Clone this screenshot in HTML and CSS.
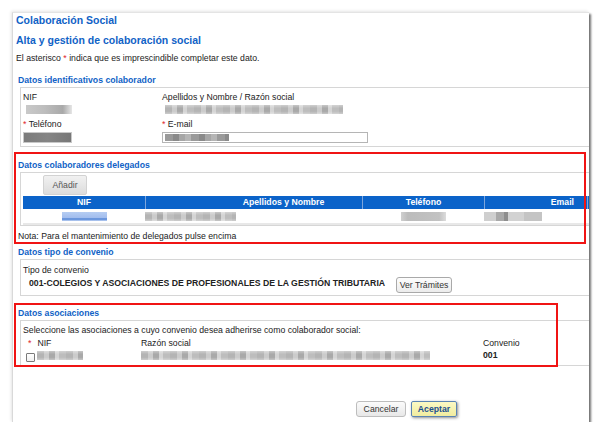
FILE: index.html
```html
<!DOCTYPE html>
<html lang="es">
<head>
<meta charset="utf-8">
<title>Colaboración Social</title>
<link rel="stylesheet" href="styles.css">
</head>
<body>
<div class="window">
  <div class="page">
    <h1 class="title">Colaboración Social</h1>
    <h2 class="title subtitle">Alta y gestión de colaboración social</h2>
    <p class="intro">El asterisco <span class="req">*</span> indica que es imprescindible completar este dato.</p>

    <section class="sec sec-id">
      <h3 class="sec-title">Datos identificativos colaborador</h3>
      <div class="box id-grid">
        <div class="field">
          <div class="label">NIF</div>
          <div class="value"><span class="blur b-nif"></span></div>
        </div>
        <div class="field">
          <div class="label">Apellidos y Nombre / Razón social</div>
          <div class="value"><span class="blur b-name"></span></div>
        </div>
        <div class="field field-lower">
          <div class="label"><span class="req">*</span> Teléfono</div>
          <div class="input input-tel"></div>
        </div>
        <div class="field field-lower">
          <div class="label"><span class="req">*</span> E-mail</div>
          <div class="input input-mail"><span class="blur b-mail"></span></div>
        </div>
      </div>
    </section>

    <section class="sec sec-del">
      <h3 class="sec-title">Datos colaboradores delegados</h3>
      <div class="box del-box">
        <button class="btn-add" type="button">Añadir</button>
        <div class="grid-table">
          <div class="th">NIF</div>
          <div class="th th-name">Apellidos y Nombre</div>
          <div class="th">Teléfono</div>
          <div class="th th-mail">Email</div>
          <div class="th"></div>
          <div class="td td-center"><span class="blur b-link"></span></div>
          <div class="td"><span class="blur b-dname"></span></div>
          <div class="td td-center"><span class="blur b-dtel"></span></div>
          <div class="td"><span class="blur b-dmail"></span></div>
          <div class="td"></div>
        </div>
      </div>
      <p class="nota">Nota: Para el mantenimiento de delegados pulse encima</p>
    </section>

    <section class="sec sec-conv">
      <h3 class="sec-title">Datos tipo de convenio</h3>
      <div class="box conv-box">
        <div class="label">Tipo de convenio</div>
        <div class="conv-row">
          <span class="conv-name">001-COLEGIOS Y ASOCIACIONES DE PROFESIONALES DE LA GESTIÓN TRIBUTARIA</span>
          <button class="btn-small" type="button">Ver Trámites</button>
        </div>
      </div>
    </section>

    <section class="sec sec-asoc">
      <h3 class="sec-title">Datos asociaciones</h3>
      <div class="box asoc-box">
        <div class="asoc-intro">Seleccione las asociaciones a cuyo convenio desea adherirse como colaborador social:</div>
        <div class="asoc-grid">
          <div class="asoc-head asoc-nif"><span class="req req-gap">*</span>NIF</div>
          <div class="asoc-head">Razón social</div>
          <div class="asoc-head">Convenio</div>
          <div class="asoc-cell asoc-check"><span class="checkbox"></span><span class="blur b-anif"></span></div>
          <div class="asoc-cell"><span class="blur b-arazon"></span></div>
          <div class="asoc-cell asoc-conv">001</div>
        </div>
      </div>
    </section>

    <div class="actions">
      <button class="btn-cancel" type="button">Cancelar</button>
      <button class="btn-ok" type="button">Aceptar</button>
    </div>
  </div>

  <div class="annot annot-del"></div>
  <div class="annot annot-asoc"></div>
</div>
</body>
</html>
```

FILE: styles.css
```css
* { box-sizing: border-box; }

body {
  margin: 0;
  background: #fff;
  font-family: "Liberation Sans", Arial, sans-serif;
  font-size: 8.7px;
  line-height: 12px;
  color: #222;
}

.window {
  position: relative;
  margin: 12px 0 0 12px;
  width: 577px;
  height: 410px;
  background: #fff;
  border-left: 1px solid #d9d9d9;
  border-top: 1px solid #e4e4e4;
  box-shadow: 2px 2px 2px rgba(0, 0, 0, 0.55), -1px -1px 3px rgba(0, 0, 0, 0.1);
  overflow: hidden;
}

.page {
  width: 600px;
  padding: 1px 0 0 3px;
}

.title {
  margin: 0;
  font-size: 10.5px;
  line-height: 13px;
  font-weight: bold;
  color: #1062c6;
}

.subtitle { margin-top: 7px; }

.intro { margin: 5px 0 0; color: #222; }

.req { color: #e0262b; }

.sec-title {
  margin: 0 0 1px;
  padding-left: 2px;
  font-size: 8.7px;
  line-height: 12px;
  font-weight: bold;
  color: #1062c6;
}

.sec-id .sec-title { margin-top: 10px; }
.sec-del .sec-title { margin-top: 12px; }
.sec-conv .sec-title { margin-top: 4px; }
.sec-asoc .sec-title { margin-top: 11px; }

.box {
  margin-left: 4px;
  border: 1px solid #d6d6d6;
  border-right: none;
  padding: 3px 0 3px 2px;
}

/* blurred (pixelated) private data */
.blur {
  display: inline-block;
  height: 9px;
  vertical-align: top;
  background:
    linear-gradient(rgba(255,255,255,0.35), rgba(255,255,255,0) 35%, rgba(255,255,255,0) 70%, rgba(255,255,255,0.35)),
    repeating-linear-gradient(90deg, #b4b4b4 0 7px, #cbcbcb 7px 12px, #a9a9a9 12px 18px, #d4d4d4 18px 22px, #bdbdbd 22px 29px);
}

/* section 1 */
.id-grid {
  display: grid;
  grid-template-columns: 139px 1fr;
}

.field-lower { margin-top: 2px; }

.value { height: 13px; padding: 2px 0 0 3px; }

.b-nif {
  width: 46px;
  background: linear-gradient(90deg, #c9c9c9, #bdbdbd 40%, #a9a9a9 80%, #e6e6e6);
}

.b-name { width: 178px; }

.input {
  margin-top: 2px;
  height: 11px;
  border: 1px solid #b5b5b5;
}

.input-tel {
  width: 49px;
  background: linear-gradient(90deg, #7b7b7b, #858585 50%, #777);
  border-color: #c8c8c8;
}

.input-mail {
  width: 206px;
  background: #fff;
  padding: 1px 0 0 2px;
}

.b-mail {
  width: 64px;
  height: 7px;
  background: repeating-linear-gradient(90deg, #9a9a9a 0 8px, #8a8a8a 8px 14px, #a6a6a6 14px 20px, #b5b5b5 20px 26px);
}

/* section 2 */
.del-box { padding: 2px 0 0 2px; }

.btn-add {
  display: block;
  margin-left: 20px;
  width: 44px;
  height: 20px;
  padding: 0;
  border: 1px solid #d2d2d2;
  border-radius: 2px;
  background: linear-gradient(#f1f1f1, #dcdcdc);
  font-family: inherit;
  font-size: 8.7px;
  color: #555;
}

.grid-table {
  margin-top: 1px;
  display: grid;
  grid-template-columns: 122px 217px 122px 103px 30px;
}

.th {
  height: 13px;
  line-height: 13px;
  background: #0b63c9;
  color: #fff;
  font-weight: bold;
  text-align: center;
  border-left: 1px solid #7ea6dc;
}

.th:first-child { border-left: none; }

.th-name { padding-left: 59px; }

.th-mail { text-align: right; padding-right: 13px; }

.td {
  height: 16px;
  padding-top: 3px;
  border-bottom: 2px solid #e8e8e8;
}

.td-center { text-align: center; }

.b-link {
  width: 45px;
  background: linear-gradient(#b6cdf2, #a2bdee 65%, #6c97dd 70%, #6c97dd 85%, #c9d9f5);
}

.b-dname { width: 91px; }

.b-dtel {
  width: 45px;
  background: linear-gradient(90deg, #d0d0d0, #bcbcbc 15%, #c2c2c2 85%, #dcdcdc);
}

.b-dmail {
  width: 58px;
  background: repeating-linear-gradient(90deg, #cfcfcf 0 12px, #a9a9a9 12px 20px, #8e8e8e 20px 24px, #d2d2d2 24px 40px, #c4c4c4 40px 58px);
}

.nota {
  margin: 4px 0 0;
  padding-left: 2px;
}

/* section 3 */
.conv-box { padding: 4px 0 2px 2px; }

.conv-row {
  margin-top: 1px;
  height: 16px;
  display: flex;
  align-items: flex-start;
}

.conv-name {
  margin-left: 6px;
  font-size: 8.7px;
  font-weight: bold;
  color: #222;
}

.btn-small {
  margin-left: 11px;
  width: 56px;
  height: 16px;
  padding: 0;
  border: 1px solid #a9a9a9;
  border-radius: 3px;
  background: linear-gradient(#fdfdfd, #ececec);
  font-family: inherit;
  font-size: 8.7px;
  color: #333;
}

/* section 4 */
.asoc-box { padding: 3px 0 2px 2px; }

.asoc-grid {
  margin-top: 1px;
  display: grid;
  grid-template-columns: 118px 342px 1fr;
}

.asoc-head { height: 12px; }

.asoc-nif { padding-left: 5px; }

.req-gap { margin-right: 6px; }

.asoc-cell { height: 14px; }

.asoc-check {
  display: flex;
  align-items: flex-start;
  padding-left: 3px;
}

.checkbox {
  margin-top: 4px;
  width: 9px;
  height: 9px;
  border: 1px solid #7a7a7a;
  border-radius: 1px;
  background: linear-gradient(#fff, #f0f0f0);
}

.b-anif {
  margin: 2px 0 0 2px;
  width: 46px;
}

.asoc-cell .b-arazon {
  margin-top: 2px;
  width: 289px;
}

.asoc-conv { font-weight: bold; }

/* footer buttons */
.actions {
  margin-top: 35px;
  padding-left: 340px;
  display: flex;
  gap: 5px;
}

.btn-cancel {
  width: 50px;
  height: 16px;
  padding: 0;
  border: 1px solid #bdbdbd;
  border-radius: 3px;
  background: linear-gradient(#fbfbfb, #e8e8e8);
  font-family: inherit;
  font-size: 8.7px;
  color: #333;
}

.btn-ok {
  width: 46px;
  height: 16px;
  padding: 0;
  border: 1px solid #5b84b3;
  border-radius: 2px;
  background: linear-gradient(#fbf9c4, #f1ec9f);
  box-shadow: 1px 1px 3px rgba(0, 0, 0, 0.45);
  font-family: inherit;
  font-size: 8.7px;
  font-weight: bold;
  color: #1c4f8e;
}

/* red annotation frames drawn over the screenshot */
.annot {
  position: absolute;
  left: 1px;
  border: 2px solid #f01414;
  pointer-events: none;
}

.annot-del {
  top: 139px;
  width: 572px;
  height: 92px;
}

.annot-asoc {
  top: 290px;
  width: 544px;
  height: 64px;
}
```
